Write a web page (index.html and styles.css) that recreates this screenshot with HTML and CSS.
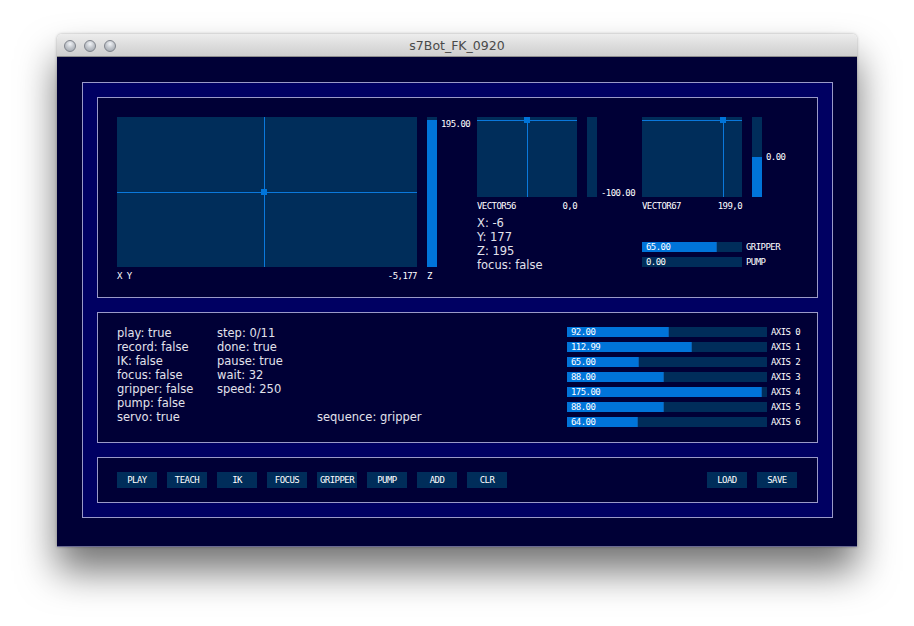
FILE: index.html
```html
<!DOCTYPE html>
<html>
<head>
<meta charset="utf-8">
<title>s7Bot_FK_0920</title>
<link rel="stylesheet" href="styles.css">
</head>
<body>
<div class="window">
  <div class="titlebar">
    <div class="lights"><span class="light"></span><span class="light"></span><span class="light"></span></div>
    <div class="title">s7Bot_FK_0920</div>
    <div></div>
  </div>
  <div class="content">
    <div class="frame">
      <div class="panel p1">
        <div class="xyblock">
          <div class="pad xy">
            <div class="hline" style="top:75px"></div>
            <div class="vline" style="left:147px"></div>
            <div class="handle" style="left:144px;top:72px"></div>
          </div>
          <div class="padlabels bf"><span>X Y</span><span>-5,177</span></div>
        </div>
        <div class="zblock">
          <div class="vslider tall">
            <div class="vfill" style="height:147px"></div>
            <div class="vval bf" style="top:2px">195.00</div>
          </div>
          <div class="padlabels bf"><span>Z</span></div>
        </div>
        <div class="midcol">
          <div class="padrow">
            <div class="padcol">
              <div class="pad vec">
                <div class="hline" style="top:3px"></div>
                <div class="vline" style="left:50px"></div>
                <div class="handle" style="left:47px;top:0"></div>
              </div>
              <div class="padlabels bf"><span>VECTOR56</span><span>0,0</span></div>
            </div>
            <div class="vslider short">
              <div class="vfill" style="height:0"></div>
              <div class="vval bf" style="top:71px">-100.00</div>
            </div>
          </div>
          <div class="readout info">
            <div>X: -6</div>
            <div>Y: 177</div>
            <div>Z: 195</div>
            <div>focus: false</div>
          </div>
        </div>
        <div class="rightcol">
          <div class="padrow">
            <div class="padcol">
              <div class="pad vec">
                <div class="hline" style="top:3px"></div>
                <div class="vline" style="left:81px"></div>
                <div class="handle" style="left:78px;top:0"></div>
              </div>
              <div class="padlabels bf"><span>VECTOR67</span><span>199,0</span></div>
            </div>
            <div class="vslider short">
              <div class="vfill" style="height:40px"></div>
              <div class="vval bf" style="top:35px">0.00</div>
            </div>
          </div>
          <div class="hsliders">
            <div class="hslider">
              <div class="track small"><div class="fill" style="width:75px"></div><span class="val bf">65.00</span></div>
              <span class="hlabel bf">GRIPPER</span>
            </div>
            <div class="hslider">
              <div class="track small"><div class="fill" style="width:0"></div><span class="val bf">0.00</span></div>
              <span class="hlabel bf">PUMP</span>
            </div>
          </div>
        </div>
      </div>

      <div class="panel p2">
        <div class="col info">
          <div>play: true</div>
          <div>record: false</div>
          <div>IK: false</div>
          <div>focus: false</div>
          <div>gripper: false</div>
          <div>pump: false</div>
          <div>servo: true</div>
        </div>
        <div class="col info">
          <div>step: 0/11</div>
          <div>done: true</div>
          <div>pause: true</div>
          <div>wait: 32</div>
          <div>speed: 250</div>
        </div>
        <div class="col3 info">
          <div class="seq">sequence: gripper</div>
        </div>
        <div class="axes">
          <div class="hslider"><div class="track wide"><div class="fill" style="width:102px"></div><span class="val bf">92.00</span></div><span class="hlabel bf">AXIS 0</span></div>
          <div class="hslider"><div class="track wide"><div class="fill" style="width:125px"></div><span class="val bf">112.99</span></div><span class="hlabel bf">AXIS 1</span></div>
          <div class="hslider"><div class="track wide"><div class="fill" style="width:72px"></div><span class="val bf">65.00</span></div><span class="hlabel bf">AXIS 2</span></div>
          <div class="hslider"><div class="track wide"><div class="fill" style="width:97px"></div><span class="val bf">88.00</span></div><span class="hlabel bf">AXIS 3</span></div>
          <div class="hslider"><div class="track wide"><div class="fill" style="width:195px"></div><span class="val bf">175.00</span></div><span class="hlabel bf">AXIS 4</span></div>
          <div class="hslider"><div class="track wide"><div class="fill" style="width:97px"></div><span class="val bf">88.00</span></div><span class="hlabel bf">AXIS 5</span></div>
          <div class="hslider"><div class="track wide"><div class="fill" style="width:71px"></div><span class="val bf">64.00</span></div><span class="hlabel bf">AXIS 6</span></div>
        </div>
      </div>

      <div class="panel p3">
        <div class="btn bf">PLAY</div>
        <div class="btn bf">TEACH</div>
        <div class="btn bf">IK</div>
        <div class="btn bf">FOCUS</div>
        <div class="btn bf">GRIPPER</div>
        <div class="btn bf">PUMP</div>
        <div class="btn bf">ADD</div>
        <div class="btn bf">CLR</div>
        <div class="spacer"></div>
        <div class="btn bf">LOAD</div>
        <div class="btn bf">SAVE</div>
      </div>
    </div>
  </div>
</div>
</body>
</html>
```
FILE: styles.css
```css
html {
  margin: 0;
  padding: 0;
  height: 100%;
  background: #ffffff;
}

body {
  margin: 0;
  padding: 34px 0 0 57px;
  box-sizing: border-box;
  min-height: 626px;
  height: 100%;
  overflow: hidden;
  background: #ffffff;
}

.window {
  width: 800px;
  border-radius: 5px 5px 0 0;
  box-shadow: 0 24px 38px rgba(0, 0, 0, 0.55), 0 0 3px rgba(0, 0, 0, 0.3);
}

.titlebar {
  height: 23px;
  box-sizing: border-box;
  border-radius: 5px 5px 0 0;
  background: linear-gradient(#ededed, #dadada 60%, #cfcfcf);
  border-bottom: 1px solid #8e8e8e;
  display: grid;
  grid-template-columns: 1fr auto 1fr;
  align-items: center;
}

.lights {
  display: flex;
  gap: 8px;
  padding-left: 7px;
  padding-top: 1px;
}

.light {
  width: 12px;
  height: 12px;
  box-sizing: border-box;
  border-radius: 50%;
  border: 1px solid #80848c;
  background: radial-gradient(circle at 50% 30%, #f2f4f7 0, #c4c8ce 45%, #9aa0a8 100%);
}

.title {
  font-family: "DejaVu Sans", sans-serif;
  font-size: 12.5px;
  color: #4a4a4a;
  padding-top: 1px;
}

.content {
  height: 490px;
  box-sizing: border-box;
  padding: 25px;
  background: #000036;
  border-bottom: 1px solid #6a6a92;
}

.frame {
  width: 751px;
  height: 436px;
  box-sizing: border-box;
  border: 1px solid #9a9ac8;
  background: #000062;
  padding: 14px;
  display: flex;
  flex-direction: column;
  gap: 14px;
}

.panel {
  box-sizing: border-box;
  border: 1px solid #9a9ac8;
  background: #000036;
}

.bf {
  font-family: "DejaVu Sans Mono", monospace;
  font-size: 9px;
  letter-spacing: -0.55px;
  line-height: 10px;
  color: #ffffff;
  white-space: nowrap;
}

.info {
  font-family: "DejaVu Sans", sans-serif;
  font-size: 11.5px;
  line-height: 14px;
  color: #e2e2ec;
  white-space: nowrap;
}

/* panel 1 */
.p1 {
  height: 201px;
  padding: 19px 0 0 19px;
  display: flex;
  align-items: flex-start;
}

.pad {
  position: relative;
  background: #002d5a;
}

.pad.xy {
  width: 300px;
  height: 150px;
}

.pad.vec {
  width: 100px;
  height: 80px;
}

.hline {
  position: absolute;
  left: 0;
  right: 0;
  height: 1px;
  background: #0a78dc;
}

.vline {
  position: absolute;
  top: 0;
  bottom: 0;
  width: 1px;
  background: #0a78dc;
}

.handle {
  position: absolute;
  width: 6px;
  height: 6px;
  background: #0074d9;
}

.padlabels {
  margin-top: 4px;
  height: 10px;
  display: flex;
  justify-content: space-between;
}

.xyblock {
  width: 300px;
}

.zblock {
  margin-left: 10px;
  width: 10px;
}

.vslider {
  position: relative;
  width: 10px;
  background: #002d5a;
}

.vslider.tall {
  height: 150px;
}

.vslider.short {
  height: 80px;
}

.vfill {
  position: absolute;
  left: 0;
  right: 0;
  bottom: 0;
  background: #0074d9;
}

.vval {
  position: absolute;
  left: 14px;
}

.midcol {
  margin-left: 40px;
  width: 165px;
}

.padrow {
  display: flex;
  gap: 10px;
  align-items: flex-start;
}

.padcol {
  width: 100px;
}

.readout {
  margin-top: 5px;
}

.rightcol {
  width: 150px;
}

.hsliders {
  margin-top: 31px;
  display: flex;
  flex-direction: column;
  gap: 5px;
}

.hslider {
  display: flex;
  align-items: center;
}

.track {
  position: relative;
  height: 10px;
  background: #002d5a;
  display: flex;
  align-items: center;
}

.track.small {
  width: 100px;
}

.track.wide {
  width: 200px;
}

.fill {
  position: absolute;
  left: 0;
  top: 0;
  bottom: 0;
  background: #0074d9;
  box-shadow: inset -1px 0 0 #0a5fb0;
}

.val {
  position: relative;
  padding-left: 4px;
}

.hlabel {
  margin-left: 4px;
}

/* panel 2 */
.p2 {
  height: 131px;
  padding: 13px 0 0 19px;
  display: flex;
  align-items: flex-start;
}

.col {
  width: 100px;
}

.col3 {
  width: 250px;
}

.seq {
  margin-top: 84px;
}

.axes {
  padding-top: 1px;
  display: flex;
  flex-direction: column;
  gap: 5px;
}

/* panel 3 */
.p3 {
  height: 46px;
  padding: 14px 20px 0 19px;
  display: flex;
  align-items: flex-start;
  gap: 10px;
}

.btn {
  width: 40px;
  height: 16px;
  line-height: 16px;
  text-align: center;
  background: #002d5a;
}

.spacer {
  flex: 1;
}
```
